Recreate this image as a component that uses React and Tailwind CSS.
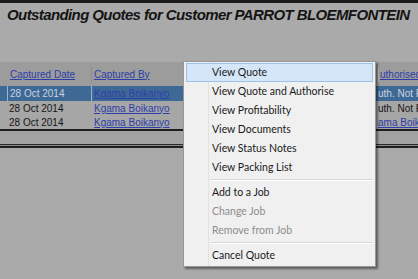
import React from "react";

const menuItems = [
  { label: "View Quote", active: true },
  { label: "View Quote and Authorise" },
  { label: "View Profitability" },
  { label: "View Documents" },
  { label: "View Status Notes" },
  { label: "View Packing List" },
  { sep: true },
  { label: "Add to a Job" },
  { label: "Change Job", disabled: true },
  { label: "Remove from Job", disabled: true },
  { sep: true },
  { label: "Cancel Quote" },
];

const rows = [
  { date: "28 Oct 2014", by: "Kgama Boikanyo", auth: "uth. Not Re", selected: true },
  { date: "28 Oct 2014", by: "Kgama Boikanyo", auth: "uth. Not Re" },
  { date: "28 Oct 2014", by: "Kgama Boikanyo", auth: "ama Boik", link: true },
];

export default function App() {
  return (
    <div className="relative w-[418px] h-[279px] overflow-hidden bg-[#aaaaaa] font-['Liberation_Sans',Arial,sans-serif]">
      <div className="h-[3px] bg-[#1c1c1c]"></div>
      <h1 className="pl-[7px] pt-[1px] h-[59px] text-[15px] tracking-[-0.6px] font-bold italic text-[#141414] whitespace-nowrap">
        Outstanding Quotes for Customer PARROT BLOEMFONTEIN
      </h1>

      {/* tabla */}
      <div className="text-[10px]">
        <div className="flex h-[24px] items-center bg-[#9c9c9c]">
          <div className="w-[91px] shrink-0 pl-[10px] text-[#2d3ea8] underline">Captured Date</div>
          <div className="w-[287px] shrink-0 pl-[2px] text-[#2d3ea8] underline border-l border-[#8c8c8c]">Captured By</div>
          <div className="flex-1 pl-[1px] text-[#2d3ea8] underline whitespace-nowrap border-l border-[#c4c4c4]">uthorised</div>
        </div>
        {rows.map((r, i) => (
          <div
            key={i}
            className={
              r.selected
                ? "flex h-[15px] items-center bg-[#3f6995] text-[#c9d2e0]"
                : "flex h-[14px] items-center bg-[#a6a6a6] text-[#151515]"
            }
          >
            <div className={r.selected ? "w-[84px] ml-[7px] shrink-0 pl-[2px] h-full flex items-center border-l border-[#9fb2c8]" : "w-[91px] shrink-0 pl-[9px]"}>
              {r.date}
            </div>
            <div className={r.selected ? "w-[287px] shrink-0 pl-[2px] h-full flex items-center border-l border-[#9fb2c8] text-[#2d3ea8] underline" : "w-[287px] shrink-0 pl-[3px] text-[#2d3ea8] underline"}>
              {r.by}
            </div>
            <div className={r.link ? "flex-1 whitespace-nowrap text-[#2d3ea8] underline" : "flex-1 whitespace-nowrap"}>
              {r.auth}
            </div>
          </div>
        ))}
        <div className="h-[2px] bg-[#1e1e1e]"></div>
        <div className="h-[13px] bg-[#a2a2a2]"></div>
        <div className="h-[1px] bg-[#2a2a2a]"></div>
        <div className="h-[1px] bg-[#8a8a8a]"></div>
        <div className="h-[2px] bg-[#1e1e1e]"></div>
      </div>

      {/* menu contextual */}
      <div className="absolute left-[183px] top-[61px] w-[193px] bg-[#f0f0f0] border border-[#979797] shadow-[2px_2px_2px_rgba(0,0,0,0.45)] font-['Lato','Open_Sans',sans-serif] text-[10.5px] py-[1px] px-[2px]">
        <div className="absolute left-[24px] top-0 bottom-0 w-px bg-[#e2e2e2]"></div>
        {menuItems.map((it, i) =>
          it.sep ? (
            <div key={i} className="ml-[24px] h-[6px] flex flex-col justify-center">
              <div className="h-px bg-[#d7d7d7]"></div>
              <div className="h-px bg-white"></div>
            </div>
          ) : (
            <div
              key={i}
              className={
                it.active
                  ? "relative h-[19px] flex items-center pl-[25px] bg-[#d5e6f8] border border-[#9dc2ea] text-[#1a1a1a]"
                  : it.disabled
                  ? "relative h-[19px] flex items-center pl-[26px] text-[#8d8d8d]"
                  : "relative h-[19px] flex items-center pl-[26px] text-[#1a1a1a]"
              }
            >
              {it.label}
            </div>
          )
        )}
      </div>
    </div>
  );
}
